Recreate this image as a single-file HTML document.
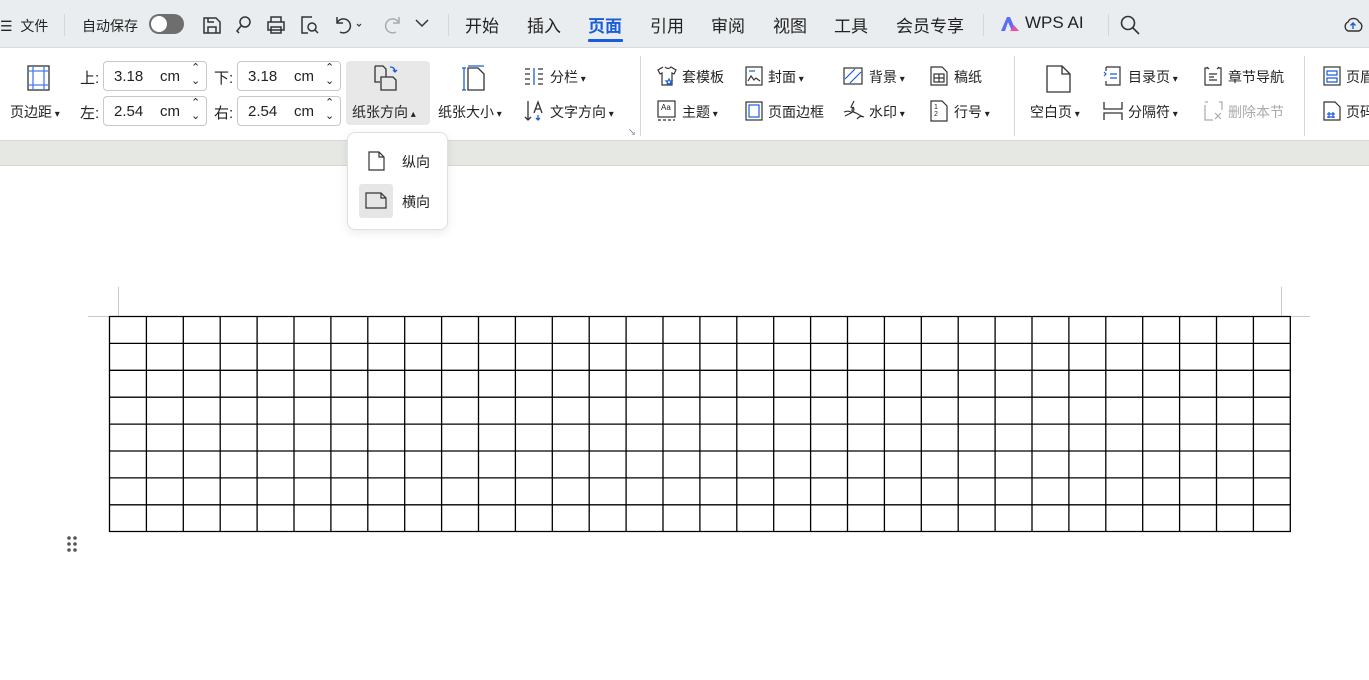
<!DOCTYPE html>
<html><head><meta charset="utf-8">
<style>
*{margin:0;padding:0;box-sizing:border-box}
body{width:1369px;height:680px;overflow:hidden;background:#fff;font-family:"Liberation Sans","Noto Sans CJK SC",sans-serif;color:#222;position:relative}
.a{position:absolute;white-space:nowrap}
#top{position:absolute;left:0;top:0;width:1369px;height:48px;background:#e9edf0;border-bottom:1px solid #d8dcdf}
#rib{position:absolute;left:0;top:49px;width:1369px;height:92px;background:#fff;border-bottom:1px solid #d6d9d6}
#band{position:absolute;left:0;top:141px;width:1369px;height:25px;background:#e5e8e3;border-bottom:1px solid #d6d8d5}
.t{font-size:17px;color:#222}
.s{font-size:14px;color:#222}
.inp{position:absolute;height:30px;border:1px solid #c8c8c8;border-radius:4px;background:#fff;font-size:15px}
.inp span{position:absolute;top:6px}
.sep{position:absolute;width:1px;background:#d5d8db}
svg{position:absolute;overflow:visible}
</style></head><body>
<div id="top"></div>
<div id="rib"></div>
<div id="band"></div>

<div class="a s" style="left:0;top:16px">☰&nbsp; 文件</div>
<div class="sep" style="left:64px;top:14px;height:22px"></div>
<div class="a s" style="left:82px;top:16px">自动保存</div>
<div class="a" style="left:149px;top:14px;width:35px;height:20px;border-radius:10px;background:#6e6e6e"><div style="position:absolute;left:2px;top:2px;width:16px;height:16px;border-radius:8px;background:#fff"></div></div>
<svg style="left:202px;top:15px" width="20" height="20" fill="none" stroke="#333" stroke-width="1.5"><path d="M2 3h12l4 4v11H2z M6 18v-6h8v6 M6 3v4h6"/></svg>
<svg style="left:234px;top:15px" width="20" height="20" fill="none" stroke="#333" stroke-width="1.5"><circle cx="11" cy="7" r="5"/><path d="M7 11l-4 5 2 2"/></svg>
<svg style="left:266px;top:15px" width="20" height="20" fill="none" stroke="#333" stroke-width="1.5"><path d="M5 7V2h10v5 M2 7h16v8H2z M5 12h10v6H5z"/></svg>
<svg style="left:298px;top:15px" width="22" height="20" fill="none" stroke="#333" stroke-width="1.5"><path d="M14 2H4v16h6"/><circle cx="14" cy="12" r="4"/><path d="M17 15l3 3"/></svg>
<svg style="left:333px;top:15px" width="30" height="20" fill="none" stroke="#333" stroke-width="1.5"><path d="M4 8a7 7 0 1 1 3 9 M4 2v6h6"/><path d="M24 9l2 2 2-2" stroke-width="1.2"/></svg>
<svg style="left:383px;top:15px" width="20" height="20" fill="none" stroke="#aaa" stroke-width="1.5"><path d="M16 8a7 7 0 1 0-3 9 M16 2v6h-6"/></svg>
<svg style="left:414px;top:17px" width="16" height="12" fill="none" stroke="#333" stroke-width="1.5"><path d="M2 3l6 6 6-6"/></svg>
<div class="sep" style="left:448px;top:14px;height:22px"></div>
<div class="a t" style="left:465px;top:12px">开始</div>
<div class="a t" style="left:527px;top:12px">插入</div>
<div class="a t" style="left:588px;top:12px;color:#1a5dd8;font-weight:bold">页面</div>
<div class="a" style="left:588px;top:39px;width:35px;height:3px;background:#1a5dd8;border-radius:1px"></div>
<div class="a t" style="left:650px;top:12px">引用</div>
<div class="a t" style="left:711px;top:12px">审阅</div>
<div class="a t" style="left:773px;top:12px">视图</div>
<div class="a t" style="left:834px;top:12px">工具</div>
<div class="a t" style="left:896px;top:12px">会员专享</div>
<div class="sep" style="left:983px;top:14px;height:22px"></div>
<svg style="left:1000px;top:16px" width="20" height="16"><path d="M1 15L7 1h3l6 14h-4L8 6 5 15z" fill="#5b6cf5"/><path d="M10 15l4-6 5 6z" fill="#e84fa6"/></svg>
<div class="a t" style="left:1025px;top:13px">WPS AI</div>
<div class="sep" style="left:1108px;top:14px;height:22px"></div>
<svg style="left:1120px;top:15px" width="22" height="22" fill="none" stroke="#333" stroke-width="1.6"><circle cx="8" cy="8" r="6.5"/><path d="M13 13l6 6"/></svg>
<svg style="left:1343px;top:15px" width="22" height="20" fill="none" stroke="#333" stroke-width="1.4"><path d="M5 16a5 5 0 0 1 0-9 6 6 0 0 1 11 0 5 5 0 0 1 0 9z"/><path d="M10 14V8M7.5 10.5L10 8l2.5 2.5" stroke="#1a5dd8"/></svg>

<svg style="left:27px;top:65px" width="24" height="26" fill="none" stroke="#333" stroke-width="1.3"><rect x="1" y="1" width="21" height="24"/><path d="M6 1v24M17 1v24M1 6h21M1 20h21" stroke="#4a7ae8"/></svg>
<div class="a s" style="left:10px;top:102px">页边距<span style="font-size:10px"> ▾</span></div>
<div class="a s" style="left:80px;top:67px;font-size:15px">上:</div>
<div class="a s" style="left:80px;top:102px;font-size:15px">左:</div>
<div class="a s" style="left:214px;top:67px;font-size:15px">下:</div>
<div class="a s" style="left:214px;top:102px;font-size:15px">右:</div>
<div class="inp" style="left:103px;top:61px;width:104px"><span style="left:10px">3.18</span><span style="left:56px">cm</span><span style="left:87px;top:0;font-size:11px;line-height:13px">⌃<br>⌄</span></div>
<div class="inp" style="left:103px;top:96px;width:104px"><span style="left:10px">2.54</span><span style="left:56px">cm</span><span style="left:87px;top:0;font-size:11px;line-height:13px">⌃<br>⌄</span></div>
<div class="inp" style="left:237px;top:61px;width:104px"><span style="left:10px">3.18</span><span style="left:56px">cm</span><span style="left:87px;top:0;font-size:11px;line-height:13px">⌃<br>⌄</span></div>
<div class="inp" style="left:237px;top:96px;width:104px"><span style="left:10px">2.54</span><span style="left:56px">cm</span><span style="left:87px;top:0;font-size:11px;line-height:13px">⌃<br>⌄</span></div>

<div class="a" style="left:346px;top:61px;width:84px;height:64px;background:#e8e8e8;border-radius:4px"></div>
<svg style="left:374px;top:65px" width="28" height="26" fill="none" stroke="#333" stroke-width="1.3"><path d="M1 1h8l3 3v8 M1 1v16h5"/><path d="M7 12h12l3 3v10H7z"/><path d="M16 2q5 0 5 5M19 5l2 2 2-2" stroke="#1a5dd8"/></svg>
<div class="a s" style="left:352px;top:102px">纸张方向<span style="font-size:10px"> ▴</span></div>
<svg style="left:462px;top:65px" width="26" height="26" fill="none" stroke="#333" stroke-width="1.3"><path d="M6 3h10l6 6v16H6z"/><path d="M2 3v22M0 3h4M0 25h4M6 1h16" stroke="#1a5dd8"/></svg>
<div class="a s" style="left:438px;top:102px">纸张大小<span style="font-size:10px"> ▾</span></div>
<svg style="left:524px;top:67px" width="20" height="18" fill="none" stroke="#333" stroke-width="1.3"><path d="M1 2h5M1 7h5M1 12h5M1 17h5M14 2h5M14 7h5M14 12h5M14 17h5"/><path d="M10 1v17" stroke="#1a5dd8"/></svg>
<div class="a s" style="left:550px;top:67px">分栏<span style="font-size:10px"> ▾</span></div>
<svg style="left:524px;top:100px" width="22" height="22" fill="none" stroke="#333" stroke-width="1.3"><path d="M4 1v19M1 17l3 3 3-3"/><path d="M10 13l4-11 4 11M11.5 9h5"/><path d="M14 15v5M12 18l2 2 2-2" stroke="#1a5dd8"/></svg>
<div class="a s" style="left:550px;top:102px">文字方向<span style="font-size:10px"> ▾</span></div>
<div class="a" style="left:628px;top:127px;font-size:8px;color:#666">↘</div>
<div class="sep" style="left:640px;top:56px;height:80px"></div>

<svg style="left:657px;top:66px" width="20" height="20" fill="none" stroke="#333" stroke-width="1.2"><path d="M6 1L1 4l2 4 2-1v12h10V7l2 1 2-4-5-3q-3 3-6 0"/><path d="M12 13l1 2 2 0-1.5 1.5.5 2-2-1-2 1 .5-2L9 15h2z" stroke="#1a5dd8"/></svg>
<div class="a s" style="left:682px;top:67px">套模板</div>
<svg style="left:745px;top:66px" width="18" height="20" fill="none" stroke="#333" stroke-width="1.2"><rect x="1" y="1" width="16" height="18"/><path d="M4 5h6" stroke="#1a5dd8"/><path d="M3 15l3-5 3 4 2-2 4 3"/></svg>
<div class="a s" style="left:768px;top:67px">封面<span style="font-size:10px"> ▾</span></div>
<svg style="left:843px;top:67px" width="20" height="18" fill="none" stroke="#333" stroke-width="1.2"><rect x="1" y="1" width="18" height="16"/><path d="M2 12L12 2M7 16L18 5" stroke="#1a5dd8"/></svg>
<div class="a s" style="left:869px;top:67px">背景<span style="font-size:10px"> ▾</span></div>
<svg style="left:930px;top:66px" width="18" height="20" fill="none" stroke="#333" stroke-width="1.2"><path d="M1 1h11l5 5v13H1z"/><rect x="4" y="8" width="10" height="8"/><path d="M9 8v8M4 12h10"/></svg>
<div class="a s" style="left:954px;top:67px">稿纸</div>
<svg style="left:657px;top:100px" width="20" height="22" fill="none" stroke="#333" stroke-width="1.2"><rect x="1" y="1" width="17" height="16"/><path d="M1 20h17" stroke-dasharray="3 2"/></svg>
<div class="a" style="left:661px;top:103px;font-size:8px">Aa</div>
<div class="a s" style="left:682px;top:102px">主题<span style="font-size:10px"> ▾</span></div>
<svg style="left:745px;top:101px" width="18" height="20" fill="none" stroke="#333" stroke-width="1.2"><rect x="1" y="1" width="16" height="18"/><rect x="4" y="4" width="10" height="12" stroke="#1a5dd8"/></svg>
<div class="a s" style="left:768px;top:102px">页面边框</div>
<svg style="left:843px;top:100px" width="22" height="22" fill="none" stroke="#333" stroke-width="1.2"><path d="M11 1l-3 6q6 2 0 6l-6 3M11 7q-5 4 2 6l7 4M1 12q5-2 8 1M14 19q3-4 7-2"/></svg>
<div class="a s" style="left:869px;top:102px">水印<span style="font-size:10px"> ▾</span></div>
<svg style="left:930px;top:100px" width="18" height="22" fill="none" stroke="#333" stroke-width="1.2"><path d="M1 1h11l5 5v15H1z"/></svg>
<div class="a" style="left:934px;top:104px;font-size:7px;line-height:7px">1<br>2</div>
<div class="a s" style="left:954px;top:102px">行号<span style="font-size:10px"> ▾</span></div>
<div class="sep" style="left:1014px;top:56px;height:80px"></div>

<svg style="left:1046px;top:65px" width="26" height="28" fill="none" stroke="#333" stroke-width="1.3"><path d="M1 1h15l8 8v18H1z M16 1v8h8"/></svg>
<div class="a s" style="left:1030px;top:102px">空白页<span style="font-size:10px"> ▾</span></div>
<svg style="left:1103px;top:66px" width="18" height="20" fill="none" stroke="#333" stroke-width="1.2"><path d="M3 1h14v18H3v-4M3 5V1"/><path d="M1 6l2 2-2 2M7 8h7M7 12h7" stroke="#1a5dd8"/></svg>
<div class="a s" style="left:1128px;top:67px">目录页<span style="font-size:10px"> ▾</span></div>
<svg style="left:1103px;top:101px" width="20" height="20" fill="none" stroke="#333" stroke-width="1.3"><path d="M1 1v7h18V1M1 19v-7h18v7"/></svg>
<div class="a s" style="left:1128px;top:102px">分隔符<span style="font-size:10px"> ▾</span></div>
<svg style="left:1204px;top:66px" width="18" height="20" fill="none" stroke="#333" stroke-width="1.2"><path d="M4 2H1v17h16V2h-3M3 1l2 2M15 1l-2 2M5 8h8M5 11h5M5 14h8"/></svg>
<div class="a s" style="left:1228px;top:67px">章节导航</div>
<svg style="left:1204px;top:101px" width="20" height="20" fill="none" stroke="#aaa" stroke-width="1.2"><path d="M1 4v15h8M1 1h3M15 1h3v8M11 12l6 6M17 12l-6 6"/></svg>
<div class="a s" style="left:1228px;top:102px;color:#aaa">删除本节</div>
<div class="sep" style="left:1304px;top:56px;height:80px"></div>
<svg style="left:1323px;top:66px" width="18" height="20" fill="none" stroke="#333" stroke-width="1.2"><rect x="1" y="1" width="16" height="18"/><path d="M4 5h10v4H4zM4 12h10v4H4z" stroke="#1a5dd8"/></svg>
<div class="a s" style="left:1346px;top:67px">页眉</div>
<svg style="left:1323px;top:101px" width="18" height="20" fill="none" stroke="#333" stroke-width="1.2"><path d="M1 1h11l5 5v13H1z"/><path d="M6 11v6M10 11v6M4 13h8M4 16h8" stroke="#1a5dd8"/></svg>
<div class="a s" style="left:1346px;top:102px">页码</div>

<div class="a" style="left:118px;top:287px;width:1px;height:29px;background:#c8c8c8"></div>
<div class="a" style="left:88px;top:316px;width:30px;height:1px;background:#c8c8c8"></div>
<div class="a" style="left:1281px;top:287px;width:1px;height:29px;background:#c8c8c8"></div>
<div class="a" style="left:1291px;top:316px;width:19px;height:1px;background:#c8c8c8"></div>

<svg style="left:109px;top:316px" width="1183" height="217">
<g stroke="#000" stroke-width="1.3">
<path d="M0.5 0.5H1181.5M0.5 27.4H1181.5M0.5 54.3H1181.5M0.5 81.2H1181.5M0.5 108.1H1181.5M0.5 135H1181.5M0.5 161.9H1181.5M0.5 188.8H1181.5M0.5 215.5H1181.5"/>
<path d="M0.5 0V216M37.4 0V216M74.3 0V216M111.2 0V216M148.1 0V216M185 0V216M221.9 0V216M258.8 0V216M295.7 0V216M332.6 0V216M369.5 0V216M406.4 0V216M443.3 0V216M480.2 0V216M517.1 0V216M554 0V216M590.9 0V216M627.8 0V216M664.7 0V216M701.6 0V216M738.5 0V216M775.4 0V216M812.3 0V216M849.2 0V216M886.1 0V216M923 0V216M959.9 0V216M996.8 0V216M1033.7 0V216M1070.6 0V216M1107.5 0V216M1144.4 0V216M1181.3 0V216"/>
</g></svg>

<svg style="left:67px;top:536px" width="12" height="18" fill="#555"><circle cx="2" cy="2" r="1.8"/><circle cx="8" cy="2" r="1.8"/><circle cx="2" cy="8" r="1.8"/><circle cx="8" cy="8" r="1.8"/><circle cx="2" cy="14" r="1.8"/><circle cx="8" cy="14" r="1.8"/></svg>

<div class="a" style="left:347px;top:132px;width:101px;height:98px;background:#fff;border:1px solid #e0e0e0;border-radius:8px;box-shadow:0 3px 10px rgba(0,0,0,.08)"></div>
<svg style="left:368px;top:151px" width="17" height="20" fill="none" stroke="#333" stroke-width="1.2"><path d="M1 1h10l5 5v13H1z M11 1v5h5"/></svg>
<div class="a s" style="left:402px;top:152px">纵向</div>
<div class="a" style="left:359px;top:184px;width:34px;height:34px;background:#e6e6e6;border-radius:3px"></div>
<svg style="left:365px;top:192px" width="22" height="18" fill="none" stroke="#333" stroke-width="1.2"><path d="M1 1h15l5 5v10H1z M16 1v5h5"/></svg>
<div class="a s" style="left:402px;top:192px">横向</div>
</body></html>
